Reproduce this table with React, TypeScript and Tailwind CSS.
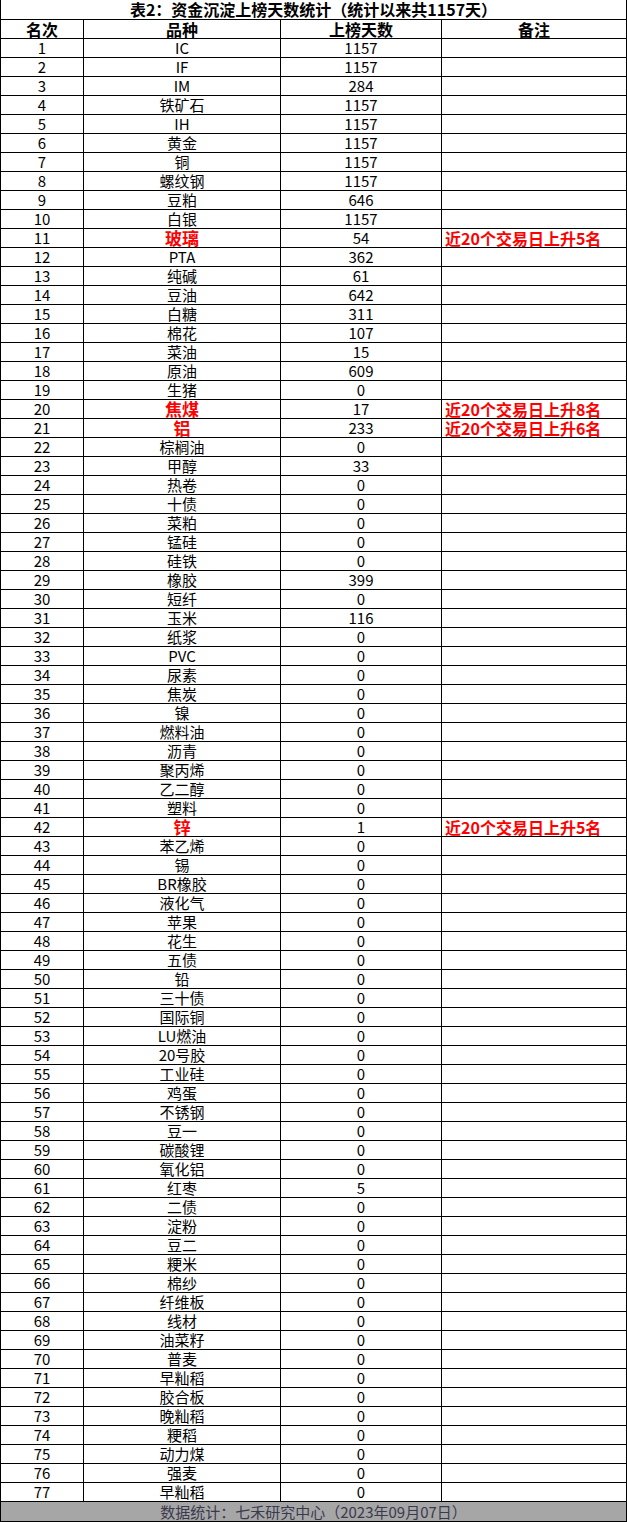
type Row = { name: string; days: number; hot?: boolean; note?: string };

const rows: Row[] = [
  { name: "IC", days: 1157 },
  { name: "IF", days: 1157 },
  { name: "IM", days: 284 },
  { name: "铁矿石", days: 1157 },
  { name: "IH", days: 1157 },
  { name: "黄金", days: 1157 },
  { name: "铜", days: 1157 },
  { name: "螺纹钢", days: 1157 },
  { name: "豆粕", days: 646 },
  { name: "白银", days: 1157 },
  { name: "玻璃", days: 54, hot: true, note: "近20个交易日上升5名" },
  { name: "PTA", days: 362 },
  { name: "纯碱", days: 61 },
  { name: "豆油", days: 642 },
  { name: "白糖", days: 311 },
  { name: "棉花", days: 107 },
  { name: "菜油", days: 15 },
  { name: "原油", days: 609 },
  { name: "生猪", days: 0 },
  { name: "焦煤", days: 17, hot: true, note: "近20个交易日上升8名" },
  { name: "铝", days: 233, hot: true, note: "近20个交易日上升6名" },
  { name: "棕榈油", days: 0 },
  { name: "甲醇", days: 33 },
  { name: "热卷", days: 0 },
  { name: "十债", days: 0 },
  { name: "菜粕", days: 0 },
  { name: "锰硅", days: 0 },
  { name: "硅铁", days: 0 },
  { name: "橡胶", days: 399 },
  { name: "短纤", days: 0 },
  { name: "玉米", days: 116 },
  { name: "纸浆", days: 0 },
  { name: "PVC", days: 0 },
  { name: "尿素", days: 0 },
  { name: "焦炭", days: 0 },
  { name: "镍", days: 0 },
  { name: "燃料油", days: 0 },
  { name: "沥青", days: 0 },
  { name: "聚丙烯", days: 0 },
  { name: "乙二醇", days: 0 },
  { name: "塑料", days: 0 },
  { name: "锌", days: 1, hot: true, note: "近20个交易日上升5名" },
  { name: "苯乙烯", days: 0 },
  { name: "锡", days: 0 },
  { name: "BR橡胶", days: 0 },
  { name: "液化气", days: 0 },
  { name: "苹果", days: 0 },
  { name: "花生", days: 0 },
  { name: "五债", days: 0 },
  { name: "铅", days: 0 },
  { name: "三十债", days: 0 },
  { name: "国际铜", days: 0 },
  { name: "LU燃油", days: 0 },
  { name: "20号胶", days: 0 },
  { name: "工业硅", days: 0 },
  { name: "鸡蛋", days: 0 },
  { name: "不锈钢", days: 0 },
  { name: "豆一", days: 0 },
  { name: "碳酸锂", days: 0 },
  { name: "氧化铝", days: 0 },
  { name: "红枣", days: 5 },
  { name: "二债", days: 0 },
  { name: "淀粉", days: 0 },
  { name: "豆二", days: 0 },
  { name: "粳米", days: 0 },
  { name: "棉纱", days: 0 },
  { name: "纤维板", days: 0 },
  { name: "线材", days: 0 },
  { name: "油菜籽", days: 0 },
  { name: "普麦", days: 0 },
  { name: "早籼稻", days: 0 },
  { name: "胶合板", days: 0 },
  { name: "晚籼稻", days: 0 },
  { name: "粳稻", days: 0 },
  { name: "动力煤", days: 0 },
  { name: "强麦", days: 0 },
  { name: "早籼稻", days: 0 },
];

const font = { fontFamily: '"Noto Sans CJK SC", sans-serif' };

export default function App() {
  return (
    <div className="w-[627px] bg-white text-black text-[15px]" style={font}>
      <div className="flex h-[20px] items-end justify-center border-x border-b border-black text-[16px] font-bold leading-[19px]">
        表2：资金沉淀上榜天数统计（统计以来共1157天）
      </div>

      <div className="flex h-[19px] border-b border-black font-bold text-[16px] leading-[18px]">
        <div className="w-[84px] border-x border-black text-center">名次</div>
        <div className="w-[197px] border-r border-black text-center">品种</div>
        <div className="w-[161px] border-r border-black text-center">上榜天数</div>
        <div className="w-[185px] border-r border-black text-center">备注</div>
      </div>

      {rows.map((r, i) => (
        <div key={i} className="flex h-[19px] border-b border-black leading-[18px]">
          <div className="w-[84px] border-x border-black text-center">{i + 1}</div>
          <div
            className={
              r.hot
                ? "w-[197px] border-r border-black text-center font-bold text-[17px] text-[#ff0000]"
                : "w-[197px] border-r border-black text-center"
            }
          >
            {r.name}
          </div>
          <div className="w-[161px] border-r border-black text-center">{r.days}</div>
          <div className="w-[185px] border-r border-black pl-[3px] font-bold text-[16px] text-[#ff0000] whitespace-nowrap">
            {r.note}
          </div>
        </div>
      ))}

      <div className="flex h-[20px] items-center justify-center border-x border-b border-black bg-[#a6a6a6] text-[#3a3a4e] leading-[19px]">
        数据统计：七禾研究中心（2023年09月07日）
      </div>
    </div>
  );
}
